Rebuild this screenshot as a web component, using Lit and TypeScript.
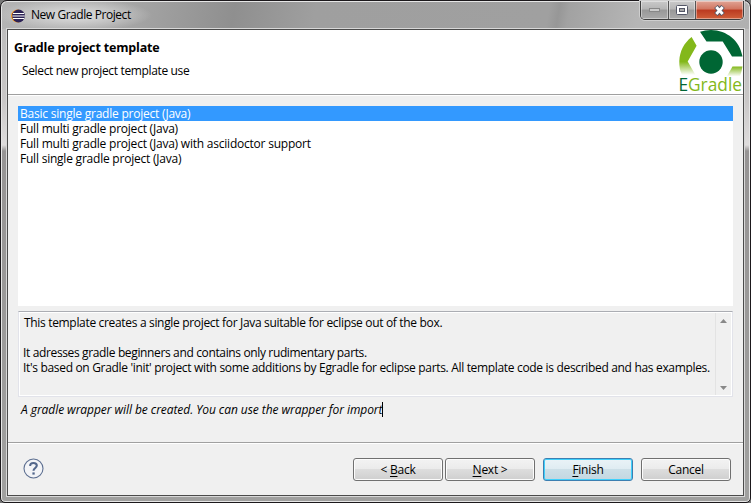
import { LitElement, html, css } from "lit";
import { customElement, state } from "lit/decorators.js";

@customElement("egradle-logo")
class EgradleLogo extends LitElement {
  static styles = css`
    :host { display: block; width: 64px; height: 64px; }
    svg { display: block; overflow: visible; }
    text { font-family: "Open Sans", "Noto Sans", sans-serif; font-size: 17.5px; letter-spacing: 0; }
  `;
  render() {
    return html`<svg width="64" height="64" viewBox="0 0 64 64">
      <defs>
        <linearGradient id="fade" x1="0" y1="0" x2="0" y2="1">
          <stop offset="0.65" stop-color="#83b81a" /><stop offset="1" stop-color="#83b81a" stop-opacity="0" />
        </linearGradient>
        <linearGradient id="fade2" x1="0" y1="0" x2="0" y2="1">
          <stop offset="0" stop-color="#83b81a" /><stop offset="1" stop-color="#83b81a" stop-opacity="0.05" />
        </linearGradient>
      </defs>
      <path fill="#006634" d="M21 1.8Q26 0 32 0C48 .2 61 11 63.5 26.5H53L43.7 11.4H27.5Z" />
      <path fill="url(#fade)" d="M12.6 7L17.6 15.8 8.7 31.5 16.5 45H3Q0 39 .3 31C.8 21 5 13 12.6 7Z" />
      <path fill="url(#fade2)" d="M53.5 36.5H63.5Q62.6 42 61 46H48Z" />
      <circle cx="32" cy="32" r="11.7" fill="#006634" />
      <text x="-0.6" y="60.8" fill="#006634" textLength="63.6" lengthAdjust="spacingAndGlyphs">E<tspan fill="#83b81a">Gradle</tspan></text>
    </svg>`;
  }
}

@customElement("app-root")
class AppRoot extends LitElement {
  @state() private selected = 0;

  private templates = [
    "Basic single gradle project (Java)",
    "Full multi gradle project (Java)",
    "Full multi gradle project (Java) with asciidoctor support",
    "Full single gradle project (Java)",
  ];

  static styles = css`
    * { box-sizing: border-box; }
    :host {
      display: block; width: 751px; height: 503px; background: #777; overflow: hidden;
      font: 12px/15px "Open Sans", "Noto Sans", sans-serif; letter-spacing: -0.35px; color: #000;
    }
    .window {
      width: 751px; height: 503px; border: 1px solid #1b181b; border-radius: 7px 7px 5px 5px;
      display: flex; flex-direction: column; padding: 0 6px 6px 5px;
      box-shadow: inset 0 0 0 1px #e6e6e6;
      background: linear-gradient(180deg, #b9b9b9 0, #c9c7c7 100px, #dedcdc 144px, #969494 150px, #a0a09f 480px);
    }
    .titlebar {
      height: 27px; margin: 1px -5px 0 -4px; padding: 0 0 0 9px; display: flex; border-radius: 6px 6px 0 0; flex: none;
      background:
        radial-gradient(ellipse 78px 16px at 72px 13px, #d2d2d2 30%, #d2d2d200 100%),
        linear-gradient(100deg, #b4b4b4 0, #acacac 100px, #8f8f8f 230px, #9f9f9f 310px, #a0a0a0 540px, #979797 550px, #a2a2a2 560px, #b6b6b6 630px, #b0b0b0 100%);
    }
    .eclipse { margin-top: 7px; width: 14px; height: 14px; }
    .title { margin: 5px 0 0 6px; letter-spacing: -0.45px; }
    .controls {
      margin: -1px 5px 0 auto; height: 19px; width: 104px; display: flex; border: 1px solid #3e3e3e; border-top: 0;
      border-radius: 0 0 5px 5px; overflow: hidden; box-shadow: 0 0 0 1px #cfcfcf;
    }
    .control { display: flex; align-items: center; justify-content: center; border-right: 1px solid #555; width: 28px;
      background: linear-gradient(#c9c9c9 0, #b5b5b5 45%, #989898 50%, #aaa 100%); box-shadow: inset 0 0 0 1px #ffffff66; }
    .control.max { width: 27px; }
    .control.close { flex: 1; border: 0; background: linear-gradient(#e0a495 0, #d17560 45%, #bb3a20 50%, #d0603a 100%); }
    .client {
      flex: 1; border: 1px solid #4b4b4b; box-shadow: 0 0 0 1px #d8d8d8;
      background: #f0f0f0; display: flex; flex-direction: column;
      width: 737px; margin-left: 1px;
    }
    .header { height: 64px; background: #fff; display: flex; justify-content: space-between; flex: none; padding-right: 0; }
    .heading { margin: 10px 0 0 6px; font-weight: 700; font-size: 12.5px; letter-spacing: -0.17px; }
    .subheading { margin: 8px 0 0 14px; }
    .rule { height: 2px; background: #a0a0a0; border-bottom: 1px solid #fff; flex: none; }
    .list { margin: 10px 10px 0 10px; height: 200px; background: #fff; flex: none; }
    .item { height: 15px; padding-left: 2px; line-height: 16px; white-space: nowrap; letter-spacing: -0.22px; }
    .item.selected { background: #3399ff; color: #fff; }
    .description {
      margin: 5px 10px 0 10px; height: 86px; border: 1px solid #e2e3ea; border-top-color: #abadb3; flex: none;
      box-shadow: inset 0 0 0 1px #fff; display: flex; justify-content: space-between; padding: 1px;
    }
    .lines { padding: 2px 0 0 3px; }
    .line { height: 15px; white-space: nowrap; letter-spacing: -0.325px; }
    .tight { letter-spacing: -0.36px; }
    .first { padding-left: 1px; }
    .scroll { width: 16px; background: #f0f0f0; border-left: 1px solid #e3e3e3; display: flex; flex-direction: column;
      justify-content: space-between; align-items: center; padding: 6px 0 5px; }
    .status { margin: 5px 0 0 13px; height: 16px; display: flex; font-style: italic; line-height: 16px; letter-spacing: -0.06px; white-space: nowrap; flex: none; }
    .caret { width: 1px; height: 15px; background: #000; }
    .footer-rule { margin-top: 24px; }
    .footer { display: flex; padding: 14px 12px 0 15px; }
    .spacer { flex: 1; }
    button {
      width: 90px; height: 23px; padding: 0; border: 1px solid #707070; border-radius: 3px; font: inherit; letter-spacing: -0.25px; color: #000;
      background: linear-gradient(#f3f3f3 0, #ebebeb 48%, #dddddd 50%, #cfcfcf 100%); box-shadow: inset 0 0 0 1px #fcfcfc;
      margin-left: 2px;
    }
    button.wide { margin-left: 8px; }
    button.default { border-color: #3c7fb1; box-shadow: inset 0 0 0 1px #40d0fb; background: linear-gradient(#eaf3f7 0, #dfecf2 48%, #cddfe7 50%, #c3d7e1 100%); }
    u { text-underline-offset: 2px; text-decoration-thickness: 1px; }
  `;

  render() {
    return html`<div class="window">
      <div class="titlebar">
        <svg class="eclipse" viewBox="0 0 14 14">
          <circle cx="6.5" cy="7" r="6.5" fill="#f7941e" /><circle cx="7.5" cy="7" r="6.4" fill="#2c2255" />
          <path d="M2 4.5h11M1.4 7h12.4M2 9.5h11" stroke="#fff" stroke-width="1.1" />
        </svg>
        <div class="title">New Gradle Project</div>
        <div class="controls">
          <div class="control"><svg width="11" height="4"><rect x=".5" y=".5" width="10" height="3" fill="#ccc" stroke="#888" /></svg></div>
          <div class="control max"><svg width="12" height="10"><rect x=".5" y=".5" width="11" height="9" rx="1" fill="#fff" stroke="#535666" /><rect x="3.5" y="3.5" width="5" height="3" fill="#aaa" stroke="#535666" /></svg></div>
          <div class="control close"><svg width="13" height="11" viewBox="0 0 13 11"><path d="M3 1.5L10 9.5M10 1.5L3 9.5" stroke="#535666" stroke-width="4.8" /><path d="M3.3 2L9.7 9M9.7 2L3.3 9" stroke="#fff" stroke-width="2.9" /></svg></div>
        </div>
      </div>
      <div class="client">
        <div class="header">
          <div><div class="heading">Gradle project template</div><div class="subheading">Select new project template use</div></div>
          <egradle-logo></egradle-logo>
        </div>
        <div class="rule"></div>
        <div class="list">
          ${this.templates.map((t, i) => html`<div class="item ${i === this.selected ? "selected" : ""}" @click=${() => (this.selected = i)}>${t}</div>`)}
        </div>
        <div class="description">
          <div class="lines">
            <div class="line first">This template creates a single project for Java suitable for eclipse out of the box.</div>
            <div class="line"></div>
            <div class="line tight">It adresses gradle beginners and contains only rudimentary parts.</div>
            <div class="line">It's based on Gradle 'init' project with some additions by Egradle for eclipse parts. All template code is described and has examples.</div>
          </div>
          <div class="scroll">
            <svg width="7" height="4"><path d="M0 4L3.5 0 7 4Z" fill="#888" /></svg>
            <svg width="7" height="4"><path d="M0 0L3.5 4 7 0Z" fill="#888" /></svg>
          </div>
        </div>
        <div class="status">A gradle wrapper will be created. You can use the wrapper for import<span class="caret"></span></div>
        <div class="rule footer-rule"></div>
        <div class="footer">
          <svg width="21" height="21" viewBox="0 0 21 21"><circle cx="10.5" cy="10.5" r="9.5" fill="#f3f4f7" stroke="#5d6f91" stroke-width="1.1" /><path d="M7.2 8Q7 5 10.4 5T13.8 7.6C13.8 9.8 10.5 10.2 10.5 12.8" fill="none" stroke="#53678c" stroke-width="2.1" /><rect x="9.4" y="14.4" width="2.3" height="2.2" fill="#53678c" /></svg>
          <div class="spacer"></div>
          <button>&lt; <u>B</u>ack</button><button><u>N</u>ext &gt;</button><button class="wide default"><u>F</u>inish</button><button class="wide">Cancel</button>
        </div>
      </div>
    </div>`;
  }
}
